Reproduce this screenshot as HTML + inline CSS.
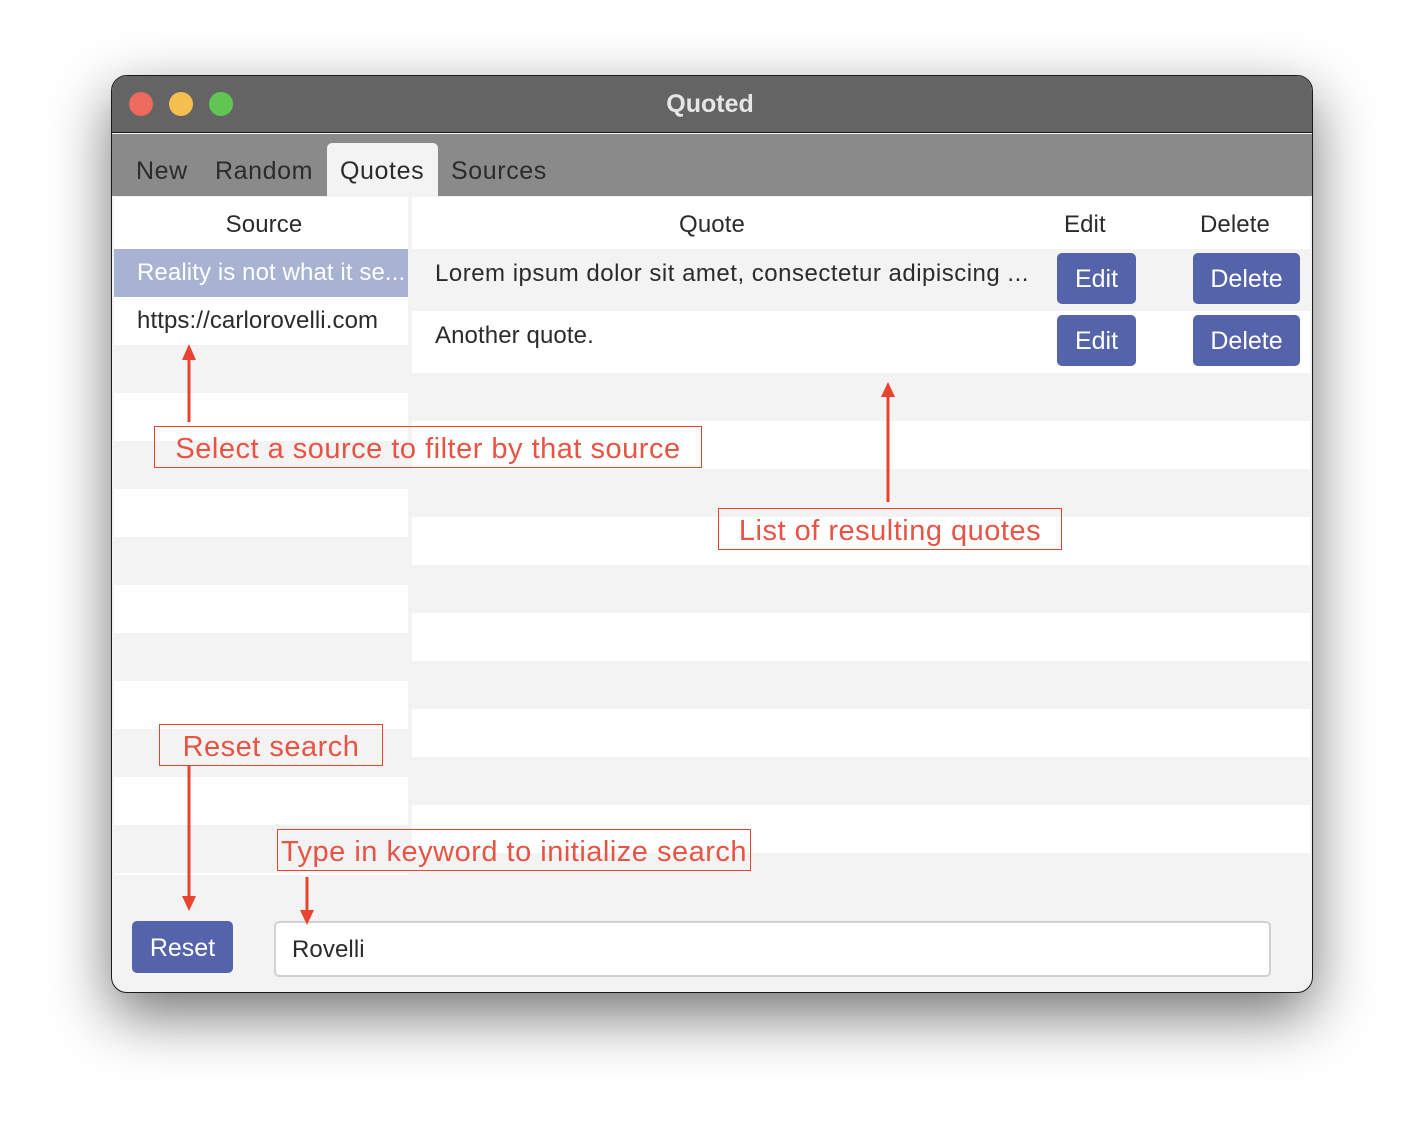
<!DOCTYPE html>
<html><head><meta charset="utf-8"><style>
*{margin:0;padding:0;box-sizing:border-box}
body{width:1424px;height:1140px;background:#fff;position:relative;overflow:hidden;font-family:"Liberation Sans",sans-serif;color:#2b2b2b}
.a{position:absolute}
#win{left:111px;top:75px;width:1202px;height:918px;border:1px solid #1a1a1a;border-radius:16px;background:#f3f3f3;overflow:hidden;box-shadow:0 22px 60px rgba(0,0,0,.55)}
.r{position:absolute;height:48px}
.g{background:#f3f3f3}.w{background:#fff}
.t{font-size:24px;letter-spacing:0.1px}
.tb{font-size:25px;letter-spacing:0.6px}
.btn{position:absolute;background:#5563ab;border-radius:5px;color:#fff;font-size:25px;text-align:center;line-height:53px;height:51px}
.ann{position:absolute;border:1.5px solid #e8432f;color:#e85444;font-size:29px;line-height:44px;text-align:center;letter-spacing:0.5px;white-space:nowrap}
</style></head><body>
<div id="win" class="a">
 <div class="a" style="left:0;top:0;width:1200px;height:57px;background:#636463;border-bottom:1px solid #1a1a1a"></div>
 <div class="a" style="left:17px;top:16px;width:24px;height:24px;border-radius:50%;background:#ec6a5e"></div>
 <div class="a" style="left:57px;top:16px;width:24px;height:24px;border-radius:50%;background:#f4bf4f"></div>
 <div class="a" style="left:97px;top:16px;width:24px;height:24px;border-radius:50%;background:#61c554"></div>
 <div class="a" style="left:-2px;top:14px;width:1200px;text-align:center;font-weight:bold;font-size:25px;color:#e6e6e6">Quoted</div>
 <div class="a" style="left:0;top:58px;width:1200px;height:62px;background:#8a8a8a"></div>
 <div class="a" style="left:215px;top:67px;width:111px;height:53px;background:#f3f3f3;border-radius:5px 5px 0 0"></div>
 <div class="a tb" style="left:24px;top:81px">New</div>
 <div class="a tb" style="left:103px;top:81px">Random</div>
 <div class="a tb" style="left:228px;top:81px">Quotes</div>
 <div class="a tb" style="left:339px;top:81px">Sources</div>
</div>
<!-- left table -->
<div class="r w" style="left:114px;top:197px;width:294px;height:52px"></div>
<div class="a t" style="left:114px;top:211px;width:300px;text-align:center">Source</div>
<div class="r" style="left:114px;top:249px;width:294px;background:#a8b3d4"></div>
<div class="a t" style="left:137px;top:259px;color:#fff">Reality is not what it se...</div>
<div class="r w" style="left:114px;top:297px;width:294px"></div>
<div class="a t" style="left:137px;top:307px">https://carlorovelli.com</div>
<div class="r w" style="left:114px;top:393px;width:294px"></div>
<div class="r w" style="left:114px;top:489px;width:294px"></div>
<div class="r w" style="left:114px;top:585px;width:294px"></div>
<div class="r w" style="left:114px;top:681px;width:294px"></div>
<div class="r w" style="left:114px;top:777px;width:294px"></div>
<div class="a w" style="left:114px;top:873px;width:294px;height:2px"></div>
<!-- right table -->
<div class="r w" style="left:412px;top:197px;width:898px;height:52px"></div>
<div class="a t" style="left:412px;top:211px;width:600px;text-align:center">Quote</div>
<div class="a t" style="left:1064px;top:211px">Edit</div>
<div class="a t" style="left:1200px;top:211px">Delete</div>
<div class="a t" style="left:435px;top:260px;letter-spacing:0.5px">Lorem ipsum dolor sit amet, consectetur adipiscing ...</div>
<div class="r w" style="left:412px;top:311px;width:898px;height:62px"></div>
<div class="a t" style="left:435px;top:322px">Another quote.</div>
<div class="btn" style="left:1057px;top:253px;width:79px">Edit</div>
<div class="btn" style="left:1193px;top:253px;width:107px">Delete</div>
<div class="btn" style="left:1057px;top:315px;width:79px">Edit</div>
<div class="btn" style="left:1193px;top:315px;width:107px">Delete</div>
<div class="r w" style="left:412px;top:421px;width:898px"></div>
<div class="r w" style="left:412px;top:517px;width:898px"></div>
<div class="r w" style="left:412px;top:613px;width:898px"></div>
<div class="r w" style="left:412px;top:709px;width:898px"></div>
<div class="r w" style="left:412px;top:805px;width:898px"></div>
<!-- bottom -->
<div class="btn" style="left:132px;top:921px;width:101px;height:52px;line-height:54px">Reset</div>
<div class="a" style="left:274px;top:921px;width:997px;height:56px;background:#fff;border:2px solid #d0d0d0;border-radius:5px"></div>
<div class="a t" style="left:292px;top:936px">Rovelli</div>
<!-- annotations -->
<div class="ann" style="left:154px;top:426px;width:548px;height:42px">Select a source to filter by that source</div>
<div class="ann" style="left:718px;top:508px;width:344px;height:42px">List of resulting quotes</div>
<div class="ann" style="left:159px;top:724px;width:224px;height:42px">Reset search</div>
<div class="ann" style="left:277px;top:829px;width:474px;height:42px">Type in keyword to initialize search</div>
<svg class="a" style="left:0;top:0" width="1424" height="1140">
 <g stroke="#e8432f" stroke-width="3"><line x1="189" y1="422" x2="189" y2="358"/><line x1="888" y1="502" x2="888" y2="395"/><line x1="189" y1="766" x2="189" y2="898"/><line x1="307" y1="877" x2="307" y2="912"/></g>
 <g fill="#e8432f"><polygon points="189,344 182,360 196,360"/><polygon points="888,382 881,397 895,397"/><polygon points="189,911 182,896 196,896"/><polygon points="307,925 300,910 314,910"/></g>
</svg>
</body></html>
